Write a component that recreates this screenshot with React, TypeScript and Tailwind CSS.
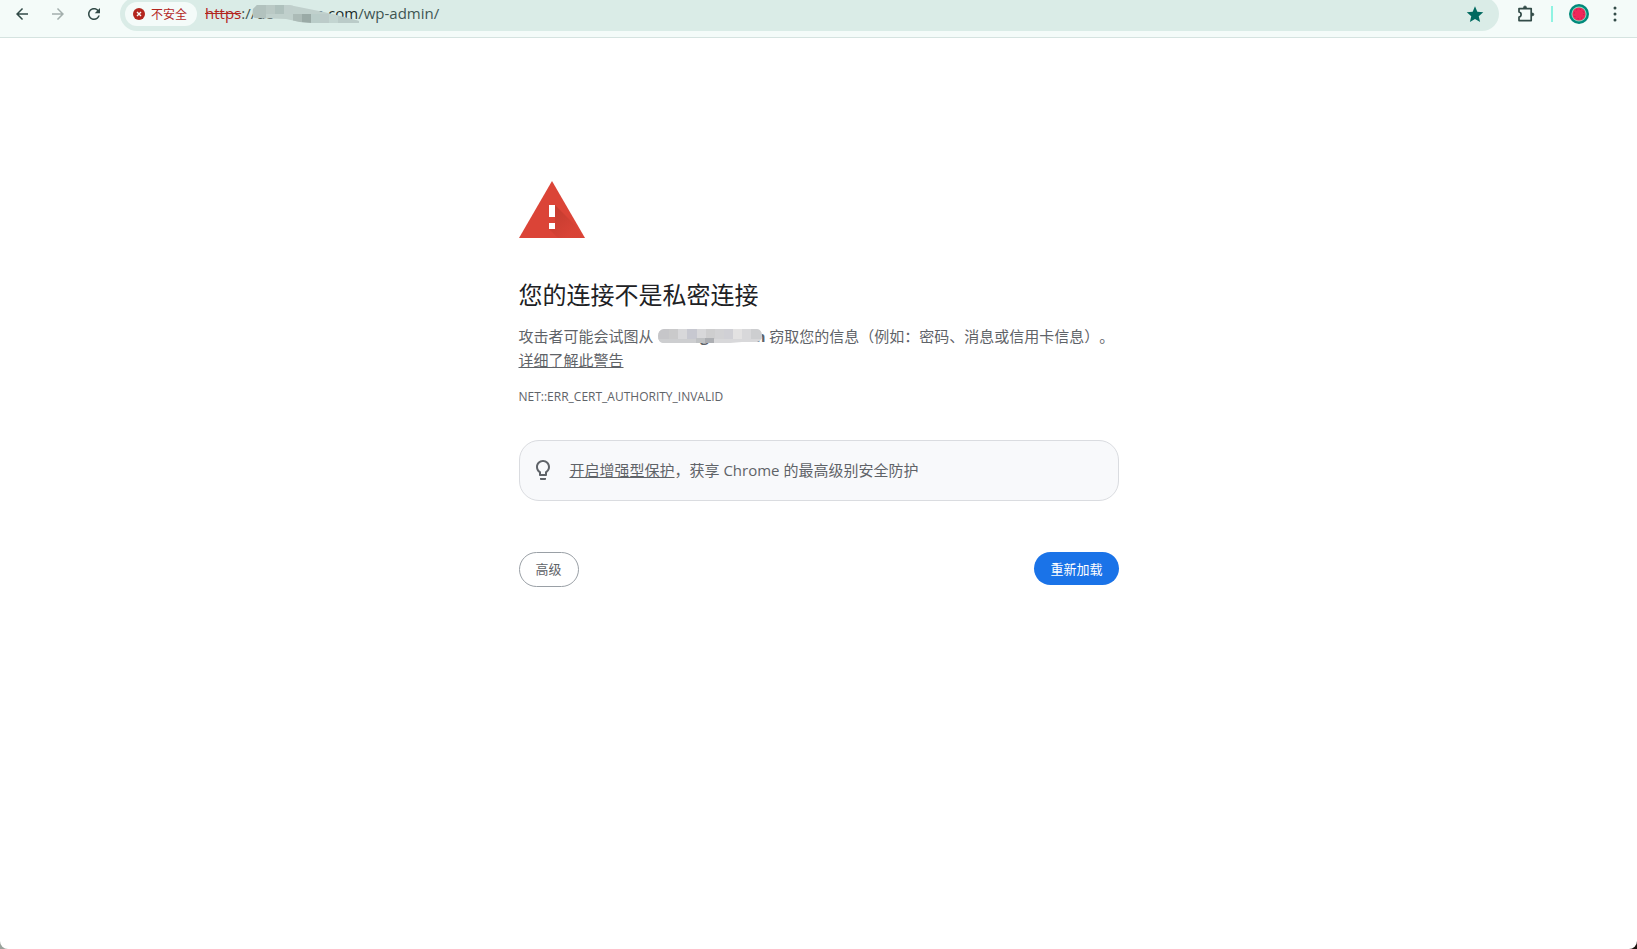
function ToolbarIcon({ label, path, className }: { label: string; path: string; className: string }) {
  return (
    <button type="button" aria-label={label} className={`flex size-7 items-center justify-center ${className}`}>
      <svg viewBox="0 0 24 24" className="size-[18px]" fill="currentColor" aria-hidden="true">
        <path d={path} />
      </svg>
    </button>
  );
}

// Pixelated smear over the host name in the address bar
function AddressMask() {
  return (
    <svg className="absolute -left-1 top-px h-[34px] w-[108px]" viewBox="0 0 108 34" aria-hidden="true">
      <defs>
        <clipPath id="address-mask">
          <path d="M5 8H37L72 15L107 24V26H60L48 25L34 22L3 21Q0 19 1 12Z" />
        </clipPath>
      </defs>
      <g clipPath="url(#address-mask)">
        <rect width="108" height="34" fill="#c0d0cc" />
        <rect x="0" y="0" width="14" height="34" fill="#b2c2be" />
        <rect x="14" y="0" width="9" height="17" fill="#bac9c5" />
        <rect x="23" y="0" width="9" height="17" fill="#afc1bd" />
        <rect x="32" y="0" width="9" height="17" fill="#c0cfcc" />
        <rect x="41" y="17" width="9" height="9" fill="#acbbb7" />
        <rect x="50" y="17" width="9" height="9" fill="#9aaaa6" />
        <rect x="59" y="17" width="9" height="9" fill="#bacdc9" />
        <rect x="68" y="17" width="9" height="9" fill="#bccbc9" />
        <rect x="77" y="17" width="9" height="9" fill="#c3d5d1" />
        <rect x="86" y="17" width="22" height="9" fill="#bacbc8" />
      </g>
    </svg>
  );
}

// Pixelated smear over the host name in the warning text
function HostMask() {
  return (
    <svg className="absolute left-px top-[5px] h-4 w-[104px]" viewBox="0 0 104 16" aria-hidden="true">
      <defs>
        <clipPath id="host-mask">
          <path d="M6 0H99Q104 1 104 7Q104 13 97 13H84L72 14H52L46 14H5Q0 13 0 7Q0 1 6 0Z" />
        </clipPath>
      </defs>
      <g clipPath="url(#host-mask)">
        <rect width="104" height="16" fill="#d8d8da" />
        <rect x="0" width="11" height="10" fill="#c6c6c9" />
        <rect x="11" width="9" height="10" fill="#cacacb" />
        <rect x="29" width="10" height="10" fill="#c7c8d0" />
        <rect x="48" width="9" height="10" fill="#cececf" />
        <rect x="57" width="9" height="10" fill="#d2d2d4" />
        <rect x="66" width="9" height="10" fill="#d0d0d5" />
        <rect x="75" width="9" height="10" fill="#e3e2e2" />
        <rect x="93" width="11" height="10" fill="#cdced0" />
        <rect x="0" y="10" width="38" height="6" fill="#cdced0" />
        <rect x="38" y="9" width="9" height="7" fill="#c0c2c4" />
        <rect x="47" y="9" width="9" height="7" fill="#adafb3" />
      </g>
    </svg>
  );
}

function Toolbar() {
  return (
    <header className="overflow-hidden border-b border-[#d5e3e0] bg-[#f4fbf9] pb-[9px]">
      <div className="flex h-7 items-center px-2">
        <nav className="flex items-center gap-2 pr-3">
          <ToolbarIcon
            label="后退"
            className="text-[#324b48]"
            path="M20 11H7.83l5.59-5.59L12 4l-8 8 8 8 1.41-1.41L7.83 13H20v-2z"
          />
          <ToolbarIcon
            label="前进"
            className="text-[#a3afad]"
            path="M12 4l-1.41 1.41L16.17 11H4v2h12.17l-5.58 5.59L12 20l8-8z"
          />
          <ToolbarIcon
            label="重新加载此页"
            className="text-[#324b48]"
            path="M17.65 6.35C16.2 4.9 14.21 4 12 4c-4.42 0-7.99 3.58-7.99 8s3.57 8 7.99 8c3.73 0 6.84-2.55 7.73-6h-2.08c-.82 2.33-3.04 4-5.65 4-3.31 0-6-2.69-6-6s2.69-6 6-6c1.66 0 3.14.69 4.22 1.78L13 11h7V4l-2.35 2.35z"
          />
        </nav>

        <div className="flex h-[34px] flex-1 items-center rounded-full bg-[#daece7] pl-[5px] pr-2.5">
          <button type="button" className="flex h-6 items-center gap-1.5 rounded-full bg-[#f4fbf9] pl-2 pr-2.5 text-xs text-[#b3261e]">
            <svg viewBox="0 0 12 12" className="size-3" aria-hidden="true">
              <circle cx="6" cy="6" r="6" fill="#b3261e" />
              <path d="M4 4l4 4M8 4l-4 4" stroke="#f4fbf9" strokeWidth="1.4" />
            </svg>
            <span className="pt-0.5">不安全</span>
          </button>
          <div className="flex flex-1 items-center whitespace-pre pb-0.5 pl-2 text-[15px] leading-[34px] text-[#3f5653]">
            <span className="text-[#b3261e] line-through">https</span>
            <span>://</span>
            <span className="relative flex w-[102px] justify-between text-[#1c2b29]">
              <span>de</span>
              <span>n.com</span>
              <AddressMask />
            </span>
            <span>/wp-admin/</span>
          </div>
          <ToolbarIcon
            label="修改此书签"
            className="text-[#006a60]"
            path="M12 18.5L5.2 22.6 7 14.9 1 9.7l7.9-.7L12 1.7 15.1 9l7.9.7-6 5.2 1.8 7.7z"
          />
        </div>

        <div className="flex items-center pl-3">
          <button type="button" aria-label="扩展程序" className="flex h-7 w-[30px] items-center justify-center text-[#324b48]">
            <svg viewBox="0 0 18 18" className="size-[18px]" fill="none" stroke="currentColor" strokeWidth="1.7" strokeLinejoin="round" aria-hidden="true">
              <path d="M2 3.6H14.2V15.6H2V12.2C4.8 11.7 4.8 7.5 2 7Z" />
              <path d="M6.5 3V2.4a1.5 1.5 0 0 1 3 0V3zM15 8h.5a1.4 1.4 0 0 1 0 2.8H15z" fill="currentColor" strokeWidth="0.6" />
            </svg>
          </button>
          <span className="ml-2.5 h-4 w-[2px] bg-[#8ff3e2]" />
          <button type="button" aria-label="个人资料" className="ml-3 flex size-7 items-center justify-center">
            <svg viewBox="0 0 20 20" className="size-5" aria-hidden="true">
              <circle cx="10" cy="10" r="10" fill="#00897b" />
              <circle cx="10" cy="10" r="7.6" fill="#7fe0c0" />
              <circle cx="10" cy="10" r="6.6" fill="#f0285a" />
              <circle cx="10" cy="10" r="4.8" fill="none" stroke="#a92a4e" strokeWidth="1" strokeDasharray="1.2 2.6" />
            </svg>
          </button>
          <ToolbarIcon
            label="菜单"
            className="ml-2 text-[#324b48]"
            path="M12 6a2 2 0 1 0 0-4 2 2 0 0 0 0 4zm0 4a2 2 0 1 0 0 4 2 2 0 0 0 0-4zm0 8a2 2 0 1 0 0 4 2 2 0 0 0 0-4z"
          />
        </div>
      </div>
    </header>
  );
}

function WarningIcon() {
  return (
    <svg viewBox="0 0 66 57" className="h-[57px] w-[66px]" aria-hidden="true">
      <defs>
        <linearGradient id="warning-shade" x1="33" y1="30" x2="52" y2="52" gradientUnits="userSpaceOnUse">
          <stop offset="0" stopColor="#a83226" stopOpacity="0.45" />
          <stop offset="1" stopColor="#a83226" stopOpacity="0.05" />
        </linearGradient>
      </defs>
      <path d="M33 0L66 57H0Z" fill="#db4437" />
      <path d="M36 24L57 45L64 57H39L30 48L36 42Z" fill="url(#warning-shade)" />
      <path d="M30 24h6v12h-6zM30 42h6v6h-6z" fill="#fff" />
    </svg>
  );
}

export default function App() {
  return (
    <div className="min-h-screen bg-linear-to-r from-[#9aa39c] to-[#1d1410] font-['Open_Sans','Noto_Sans_CJK_SC',sans-serif]">
      <div className="min-h-screen rounded-b-lg bg-white">
        <Toolbar />
        <main className="mx-auto w-full max-w-[600px] pt-[143px] text-[15px] leading-6 text-[#5f6368]">
          <WarningIcon />
          <h1 className="mt-10 pt-px text-2xl leading-8 text-[#202124]">您的连接不是私密连接</h1>
          <p className="mt-[13px] [text-spacing-trim:space-all]">
            攻击者可能会试图从{" "}
            <span className="relative inline-flex w-[108px] justify-end font-bold">
              g<span className="w-[42px]" />m
              <HostMask />
            </span>{" "}
            窃取您的信息（例如：密码、消息或信用卡信息）。
            <a href="#" className="inline-block underline">
              详细了解此警告
            </a>
          </p>
          <p className="mt-[13px] text-xs leading-6">NET::ERR_CERT_AUTHORITY_INVALID</p>

          <div className="mt-[31px] flex items-center gap-[15px] rounded-[20px] border border-[#dadce0] bg-[#f8f9fb] px-[11px] pb-[18px] pt-[17px]">
            <svg viewBox="0 0 24 24" className="size-6" fill="currentColor" aria-hidden="true">
              <path d="M9 21c0 .5.4 1 1 1h4c.6 0 1-.5 1-1v-1H9v1zm3-19C8.1 2 5 5.1 5 9c0 2.4 1.2 4.5 3 5.7V17c0 .5.4 1 1 1h6c.6 0 1-.5 1-1v-2.3c1.8-1.3 3-3.4 3-5.7 0-3.9-3.1-7-7-7zm2.9 11.1l-.9.6V16h-4v-2.3l-.9-.6C7.8 12.2 7 10.6 7 9c0-2.8 2.2-5 5-5s5 2.2 5 5c0 1.6-.8 3.2-2.1 4.1z" />
            </svg>
            <p>
              <a href="#" className="underline">
                开启增强型保护
              </a>
              ，获享 Chrome 的最高级别安全防护
            </p>
          </div>

          <div className="mt-[51px] flex items-start justify-between text-[13px]">
            <button type="button" className="h-[35px] rounded-full border border-[#9aa0a6] bg-white px-4 pb-0.5">
              高级
            </button>
            <button type="button" className="h-[33px] rounded-full bg-[#1a73e8] px-4 text-white">
              重新加载
            </button>
          </div>
        </main>
      </div>
    </div>
  );
}
